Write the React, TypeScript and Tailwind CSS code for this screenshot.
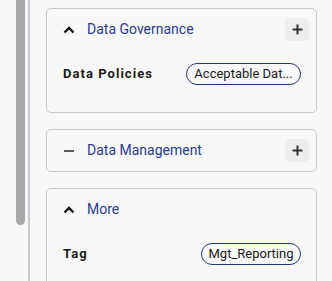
import { ReactNode } from "react";

const ChevronUp = () => (
  <svg width="12" height="8" viewBox="0 0 12 8" className="shrink-0">
    <path d="M1.5 6.5 L6 2 L10.5 6.5" fill="none" stroke="#111" strokeWidth="2.4" />
  </svg>
);

const Minus = () => (
  <svg width="12" height="8" viewBox="0 0 12 8" className="shrink-0">
    <path d="M1 4 H11" fill="none" stroke="#5a5a5a" strokeWidth="2" />
  </svg>
);

const PlusButton = () => (
  <button className="w-[24px] h-[23px] rounded-[5px] bg-[#ededed] flex items-center justify-center">
    <svg width="11" height="11" viewBox="0 0 11 11">
      <path d="M5.5 0.5 V10.5 M0.5 5.5 H10.5" fill="none" stroke="#333" strokeWidth="2" />
    </svg>
  </button>
);

const Section = ({
  title,
  open,
  plus,
  children,
}: {
  title: string;
  open: boolean;
  plus?: boolean;
  children?: ReactNode;
}) => (
  <div className="border border-[#c9c9c9] rounded-[5px] bg-[#f8f8f8] shrink-0">
    <div className="h-[41px] flex items-center pl-[16px] pr-[7px]">
      <div className="w-[12px] flex justify-center">{open ? <ChevronUp /> : <Minus />}</div>
      <span className="ml-[12px] text-[14px] text-[#2b3b8f] flex-1">{title}</span>
      {plus ? <PlusButton /> : null}
    </div>
    {children}
  </div>
);

const Row = ({ label, value, pillWidth }: { label: string; value: string; pillWidth: string }) => (
  <div className="flex items-center justify-between pl-[16px] pr-[15px] pt-[13px] pb-[27px]">
    <span className="text-[13px] font-bold tracking-[0.08em] text-[#1a1a1a]">{label}</span>
    <span
      className={`${pillWidth} h-[22px] rounded-full border-[1.5px] border-[#26357d] flex items-center justify-center text-[13px] text-[#1a1a1a] px-[10px] truncate`}
    >
      {value}
    </span>
  </div>
);

export default function App() {
  return (
    <div
      className="flex h-[281px] w-[332px] bg-[#f8f8f8] overflow-hidden"
      style={{ fontFamily: "Roboto, 'Liberation Sans', sans-serif" }}
    >
      <div className="w-[16px] shrink-0" />
      <div className="w-[9px] h-[225px] bg-[#a9a9a9] rounded-b-full shrink-0" />
      <div className="w-[3px] shrink-0" />
      <div className="w-[2px] h-full bg-[#c4cad1] shrink-0" />
      <div className="flex-1 pl-[16px] pr-[15px] pt-[8px] flex flex-col gap-[16px]">
        <Section title="Data Governance" open plus>
          <Row label="Data Policies" value="Acceptable Dat..." pillWidth="w-[115px]" />
        </Section>
        <Section title="Data Management" open={false} plus />
        <Section title="More" open>
          <Row label="Tag" value="Mgt_Reporting" pillWidth="w-[100px]" />
        </Section>
      </div>
    </div>
  );
}
